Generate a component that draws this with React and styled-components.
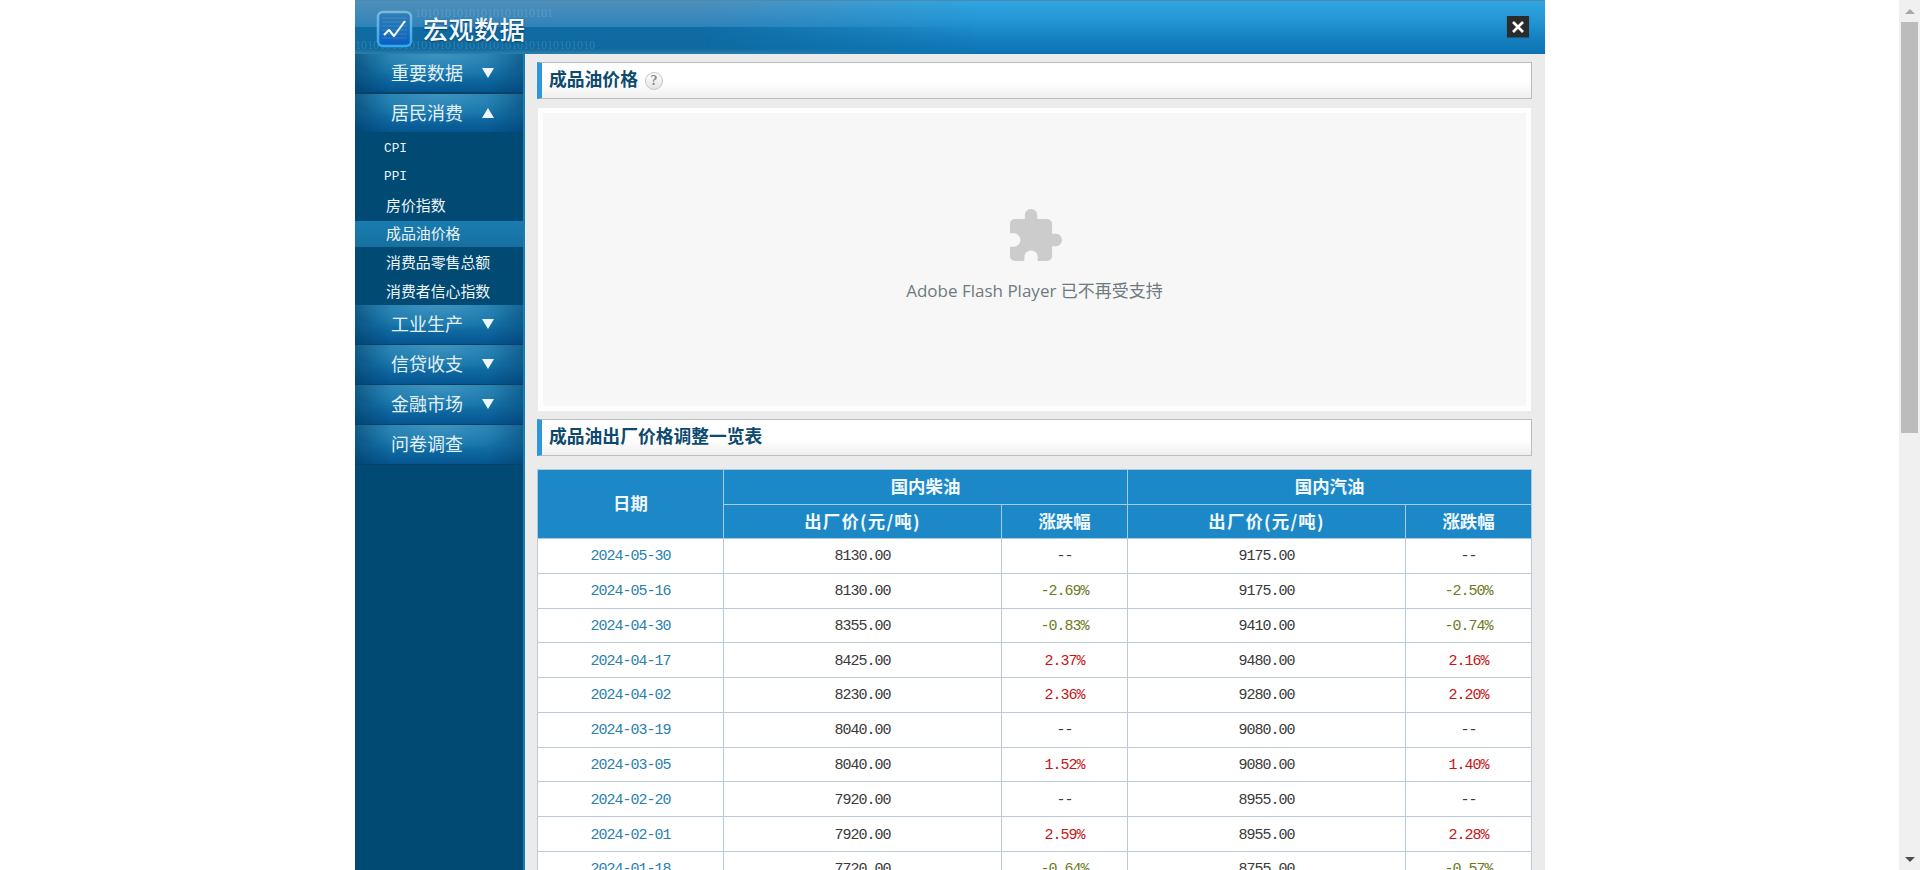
import React from "react";
import styled, { createGlobalStyle } from "styled-components";

const CJK = `"Noto Sans CJK SC", "Noto Sans", sans-serif`;
const MONO = `"Liberation Mono", "Noto Sans CJK SC", monospace`;

const Global = createGlobalStyle`
  html, body { margin: 0; height: 100%; background: #fff; overflow: hidden; }
  body { font-family: ${CJK}; }
  #root { height: 100%; }
`;

const Page = styled.div`
  height: 100%;
  display: flex;
  overflow: hidden;
`;

const PageArea = styled.div`
  flex: 1;
  min-width: 0;
  padding-left: 355px;
`;

const ScrollRail = styled.aside`
  flex: none;
  width: 21px;
  background: #f0f0f0;
  display: flex;
  flex-direction: column;
  align-items: center;
`;

const ScrollButton = styled.div`
  flex: none;
  height: 22px;
  width: 100%;
  display: flex;
  align-items: center;
  justify-content: center;
  margin-top: ${(p) => (p.$down ? "auto" : 0)};
  &::after {
    content: "";
    width: 0;
    height: 0;
    border-left: 5px solid transparent;
    border-right: 5px solid transparent;
    border-top: ${(p) => (p.$down ? "5px solid #505050" : "0")};
    border-bottom: ${(p) => (p.$down ? "0" : "5px solid #a8a8a8")};
  }
`;

const ScrollThumb = styled.div`
  flex: none;
  width: 17px;
  height: 411px;
  background: #bcbcbc;
`;

const Panel = styled.div`
  width: 1190px;
  height: 100%;
  display: flex;
  flex-direction: column;
  background: #ebebeb;
`;

const Header = styled.header`
  position: relative;
  height: 54px;
  box-sizing: border-box;
  flex: none;
  display: flex;
  align-items: center;
  padding: 0 16px 0 21px;
  overflow: hidden;
  border-top: 1px solid #4a8cb0;
  background: linear-gradient(180deg, #2fa5e0 0%, #2596d4 35%, #1681c0 70%, #0c73b3 100%);
  &::before {
    content: "";
    position: absolute;
    inset: 0 auto 0 0;
    width: 620px;
    background: linear-gradient(180deg, #4f8fbb 0%, #2f83ba 48%, #0f6ba4 50%, #0e6a9f 90%, #2f7fac 100%);
    -webkit-mask-image: linear-gradient(90deg, #000 55%, transparent 100%);
    mask-image: linear-gradient(90deg, #000 55%, transparent 100%);
  }
`;

const Binary = styled.span`
  position: absolute;
  left: ${(p) => p.$left}px;
  top: ${(p) => p.$top}px;
  font: 12px/11px "Liberation Serif", serif;
  color: rgba(255, 255, 255, 0.16);
  white-space: nowrap;
`;

const Logo = styled.svg`
  position: relative;
  flex: none;
  width: 37px;
  height: 38px;
  margin-top: 3px;
`;

const AppTitle = styled.h1`
  position: relative;
  margin: 1px 0 0 10px;
  font: 500 25.5px/20px ${CJK};
  color: #f2f8fb;
  text-shadow: 0 1px 2px rgba(0, 40, 80, 0.7);
`;

const CloseButton = styled.button`
  position: relative;
  margin-left: auto;
  margin-bottom: 2px;
  width: 22px;
  height: 21px;
  padding: 0;
  border: 0;
  background: #2b2b2b;
  box-shadow: 0 1px 1px rgba(0, 40, 80, 0.4);
  display: flex;
  align-items: center;
  justify-content: center;
`;

const Body = styled.div`
  flex: 1;
  min-height: 0;
  display: flex;
`;

const Sidebar = styled.nav`
  flex: none;
  width: 168px;
  background: #004a73;
  border-right: 2px solid #1a7db1;
`;

const MenuHead = styled.div`
  height: ${(p) => (p.$short ? 38 : 40)}px;
  box-sizing: border-box;
  display: flex;
  align-items: center;
  padding: 0 0 2px 36px;
  gap: 19px;
  color: #e4f0f7;
  font-size: 18px;
  line-height: 1;
  border-bottom: ${(p) => (p.$short ? 0 : p.$thick ? 2 : 1)}px solid #0b4263;
  background:
    radial-gradient(ellipse 90px 26px at 50% 0, rgba(90, 170, 210, 0.55), transparent),
    linear-gradient(90deg, rgba(0, 50, 90, 0.45), transparent 22%, transparent 78%, rgba(0, 50, 90, 0.35)),
    linear-gradient(180deg, #1a79ab 0%, #1473a8 50%, #055590 100%);
`;

const Arrow = styled.i`
  width: 0;
  height: 0;
  margin-top: 2px;
  border-left: 6.5px solid transparent;
  border-right: 6.5px solid transparent;
  border-top: ${(p) => (p.$up ? "0" : "10px solid #eef6fb")};
  border-bottom: ${(p) => (p.$up ? "10px solid #eef6fb" : "0")};
`;

const SubMenu = styled.div`
  padding-top: 3px;
  display: flex;
  flex-direction: column;
  gap: 2.8px;
`;

const SubItem = styled.a`
  height: 26px;
  box-sizing: border-box;
  display: flex;
  align-items: center;
  padding: 0 0 ${(p) => (p.$latin ? 0 : 3)}px ${(p) => (p.$latin ? 29 : 31)}px;
  color: #eef5f9;
  font-family: ${(p) => (p.$latin ? MONO : CJK)};
  font-size: ${(p) => (p.$latin ? 12.8 : 14.9)}px;
  background: ${(p) => (p.$active ? "linear-gradient(180deg, #1a7cb0, #176f9f)" : "transparent")};
`;

const Content = styled.main`
  flex: 1;
  min-width: 0;
  padding: 8px 13px 0 12px;
`;

const SectionBar = styled.div`
  height: 37px;
  box-sizing: border-box;
  display: flex;
  align-items: center;
  gap: 7px;
  padding: 0 0 3px 7px;
  border: 1px solid #b8bdbd;
  border-left: 5px solid #2f97d8;
  background: linear-gradient(180deg, #fff 0%, #fff 55%, #efefef 100%);
  color: #0d4a6e;
  font: 600 17.8px/1 ${CJK};
`;

const HelpIcon = styled.span`
  width: 18px;
  height: 18px;
  margin-top: 3px;
  box-sizing: border-box;
  border-radius: 50%;
  border: 1px solid #c6c6c6;
  background: linear-gradient(180deg, #fff, #e4e4e4);
  color: #8a8a8a;
  font: 700 14px/16px "Liberation Serif", serif;
  text-align: center;
`;

const PluginFrame = styled.div`
  margin: 9px 1px 8px 1px;
  height: 303px;
  box-sizing: border-box;
  border: 5px solid #fff;
  background: #f7f7f7;
  display: flex;
  flex-direction: column;
  align-items: center;
  padding-top: 96px;
`;

const PuzzleIcon = styled.svg`
  width: 52px;
  height: 52px;
  margin-left: 2px;
`;

const PluginMessage = styled.div`
  margin-top: 18px;
  font: 400 17px/24px "Open Sans", ${CJK};
  color: #6f7a80;
`;

const DataTable = styled.table`
  margin-top: 13px;
  width: 995px;
  table-layout: fixed;
  border-collapse: collapse;
  background: #fff;
  border: 1px solid #bccad8;
`;

const HeadCell = styled.th`
  background: #1c88c7;
  color: #f1f8fc;
  border: 1px solid #a9cbe0;
  font: 700 17.4px/1 ${CJK};
  letter-spacing: ${(p) => (p.$wide ? 1.2 : 0)}px;
  height: ${(p) => p.$h || 34}px;
  padding: 0 0 2px;
  box-sizing: border-box;
`;

const Row = styled.tr`
  height: 34.78px;
`;

const Cell = styled.td`
  border: 1px solid #bccad8;
  padding: 2px 0 0;
  text-align: center;
  font: 15px/1 ${MONO};
  letter-spacing: -1px;
  color: ${(p) => ({ up: "#c81414", down: "#6d7a1e", link: "#2a7fb0" }[p.$tone] || "#3a3a3a")};
`;

const rows = [
  ["2024-05-30", "8130.00", "--", "9175.00", "--"],
  ["2024-05-16", "8130.00", "-2.69%", "9175.00", "-2.50%"],
  ["2024-04-30", "8355.00", "-0.83%", "9410.00", "-0.74%"],
  ["2024-04-17", "8425.00", "2.37%", "9480.00", "2.16%"],
  ["2024-04-02", "8230.00", "2.36%", "9280.00", "2.20%"],
  ["2024-03-19", "8040.00", "--", "9080.00", "--"],
  ["2024-03-05", "8040.00", "1.52%", "9080.00", "1.40%"],
  ["2024-02-20", "7920.00", "--", "8955.00", "--"],
  ["2024-02-01", "7920.00", "2.59%", "8955.00", "2.28%"],
  ["2024-01-18", "7720.00", "-0.64%", "8755.00", "-0.57%"],
];

const toneOf = (v) => (v === "--" ? undefined : v.startsWith("-") ? "down" : "up");

const AppLogo = () => (
  <Logo viewBox="0 0 37 38">
    <defs>
      <linearGradient id="lg" x1="0" y1="0" x2="0" y2="1">
        <stop offset="0" stopColor="#2f7fb8" />
        <stop offset="0.55" stopColor="#1a6fb8" />
        <stop offset="1" stopColor="#0a5bc4" />
      </linearGradient>
      <linearGradient id="ls" x1="0" y1="0" x2="0" y2="1">
        <stop offset="0" stopColor="#7fb8d8" />
        <stop offset="1" stopColor="#35a8ec" />
      </linearGradient>
    </defs>
    <rect x="2" y="2" width="33" height="34" rx="5" fill="url(#lg)" stroke="url(#ls)" strokeWidth="2.5" />
    <path d="M6 8h25M6 12h25M6 16h25M6 20h25M6 24h25M6 28h25" stroke="#8cc0e6" strokeWidth="0.6" opacity="0.45" />
    <path d="M8 25l5-5 5 6L29 11" fill="none" stroke="#fff" strokeWidth="2" strokeLinejoin="round" />
  </Logo>
);

export default function App() {
  return (
    <>
      <Global />
      <Page>
        <PageArea>
          <Panel>
            <Header>
              <Binary $left={60} $top={7}>10101010101010101010101</Binary>
              <Binary $left={0} $top={39}>1010101010101010101010101010101010101010</Binary>
              <AppLogo />
              <AppTitle>宏观数据</AppTitle>
              <CloseButton aria-label="关闭">
                <svg width="14" height="14" viewBox="0 0 14 14">
                  <path d="M2 2l10 10M12 2L2 12" stroke="#fff" strokeWidth="2.6" />
                </svg>
              </CloseButton>
            </Header>
            <Body>
              <Sidebar>
                <MenuHead $thick>重要数据<Arrow /></MenuHead>
                <MenuHead $short>居民消费<Arrow $up /></MenuHead>
                <SubMenu>
                  <SubItem $latin>CPI</SubItem>
                  <SubItem $latin>PPI</SubItem>
                  <SubItem>房价指数</SubItem>
                  <SubItem $active>成品油价格</SubItem>
                  <SubItem>消费品零售总额</SubItem>
                  <SubItem>消费者信心指数</SubItem>
                </SubMenu>
                <MenuHead>工业生产<Arrow /></MenuHead>
                <MenuHead>信贷收支<Arrow /></MenuHead>
                <MenuHead>金融市场<Arrow /></MenuHead>
                <MenuHead>问卷调查</MenuHead>
              </Sidebar>
              <Content>
                <SectionBar>成品油价格<HelpIcon>?</HelpIcon></SectionBar>
                <PluginFrame>
                  <PuzzleIcon viewBox="2 1 21 21">
                    <path fill="#cccccc" d="M20.5 11H19V7c0-1.1-.9-2-2-2h-4V3.5C13 2.12 11.88 1 10.5 1S8 2.12 8 3.5V5H4c-1.1 0-1.99.9-1.99 2v3.8H3.5c1.49 0 2.7 1.21 2.7 2.7s-1.21 2.7-2.7 2.7H2V20c0 1.1.9 2 2 2h3.8v-1.5c0-1.49 1.21-2.7 2.7-2.7 1.49 0 2.7 1.21 2.7 2.7V22H17c1.1 0 2-.9 2-2v-4h1.5c1.38 0 2.5-1.12 2.5-2.5S21.88 11 20.5 11z" />
                  </PuzzleIcon>
                  <PluginMessage>Adobe Flash Player 已不再受支持</PluginMessage>
                </PluginFrame>
                <SectionBar>成品油出厂价格调整一览表</SectionBar>
                <DataTable>
                  <colgroup>
                    <col style={{ width: 186 }} />
                    <col style={{ width: 278 }} />
                    <col style={{ width: 126 }} />
                    <col style={{ width: 278 }} />
                    <col style={{ width: 126 }} />
                  </colgroup>
                  <thead>
                    <tr>
                      <HeadCell rowSpan={2}>日期</HeadCell>
                      <HeadCell colSpan={2} $h={35}>国内柴油</HeadCell>
                      <HeadCell colSpan={2} $h={35}>国内汽油</HeadCell>
                    </tr>
                    <tr>
                      <HeadCell $wide>出厂价(元/吨)</HeadCell>
                      <HeadCell>涨跌幅</HeadCell>
                      <HeadCell $wide>出厂价(元/吨)</HeadCell>
                      <HeadCell>涨跌幅</HeadCell>
                    </tr>
                  </thead>
                  <tbody>
                    {rows.map((r) => (
                      <Row key={r[0]}>
                        <Cell $tone="link">{r[0]}</Cell>
                        <Cell>{r[1]}</Cell>
                        <Cell $tone={toneOf(r[2])}>{r[2]}</Cell>
                        <Cell>{r[3]}</Cell>
                        <Cell $tone={toneOf(r[4])}>{r[4]}</Cell>
                      </Row>
                    ))}
                  </tbody>
                </DataTable>
              </Content>
            </Body>
          </Panel>
        </PageArea>
        <ScrollRail>
          <ScrollButton />
          <ScrollThumb />
          <ScrollButton $down />
        </ScrollRail>
      </Page>
    </>
  );
}
